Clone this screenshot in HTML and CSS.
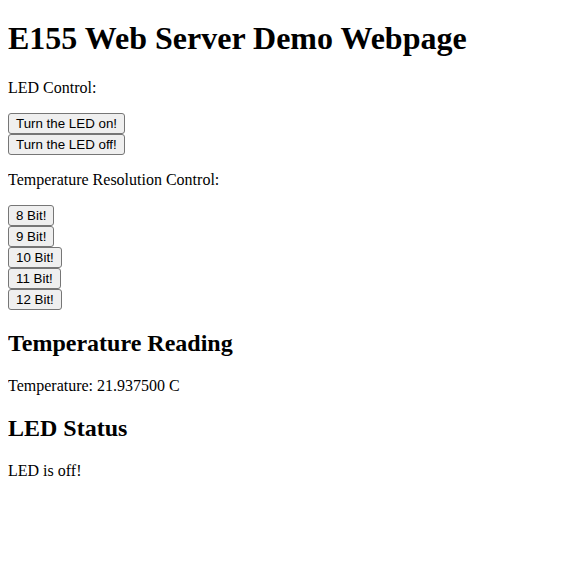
FILE: index.html
```html
<!DOCTYPE html>
<html>
<head>
<meta charset="utf-8">
<title>E155 Web Server Demo Webpage</title>
<link rel="stylesheet" href="styles.css">
</head>
<body>
<h1 class="title">E155 Web Server Demo Webpage</h1>
<p>LED Control:</p>
<form class="ctl"><button class="btn" type="button">Turn the LED on!</button></form>
<form class="ctl"><button class="btn" type="button">Turn the LED off!</button></form>
<p>Temperature Resolution Control:</p>
<form class="ctl"><button class="btn" type="button">8 Bit!</button></form>
<form class="ctl"><button class="btn" type="button">9 Bit!</button></form>
<form class="ctl"><button class="btn" type="button">10 Bit!</button></form>
<form class="ctl"><button class="btn" type="button">11 Bit!</button></form>
<form class="ctl"><button class="btn" type="button">12 Bit!</button></form>
<h2>Temperature Reading</h2>
<p>Temperature: 21.937500 C</p>
<h2>LED Status</h2>
<p>LED is off!</p>
</body>
</html>
```
FILE: styles.css
```css
body {
  margin: 8px;
  font-family: "Liberation Serif", "Times New Roman", serif;
  font-size: 16px;
  color: #000;
  background: #fff;
}
h1 {
  font-size: 32px;
  margin: 21.44px 0;
  font-weight: bold;
}
.title {
  margin-top: 12.44px;
}
h2 {
  font-size: 24px;
  margin: 19.92px 0;
  font-weight: bold;
}
p {
  margin: 16px 0;
}
.ctl {
  margin: 0;
  display: block;
}
.btn {
  font-family: "Liberation Sans", Arial, sans-serif;
  font-size: 13.333px;
  padding: 2px 7px;
  border: 1px solid #767676;
  border-radius: 3px;
  background: #efefef;
  color: #000;
  margin: 0;
}
```
